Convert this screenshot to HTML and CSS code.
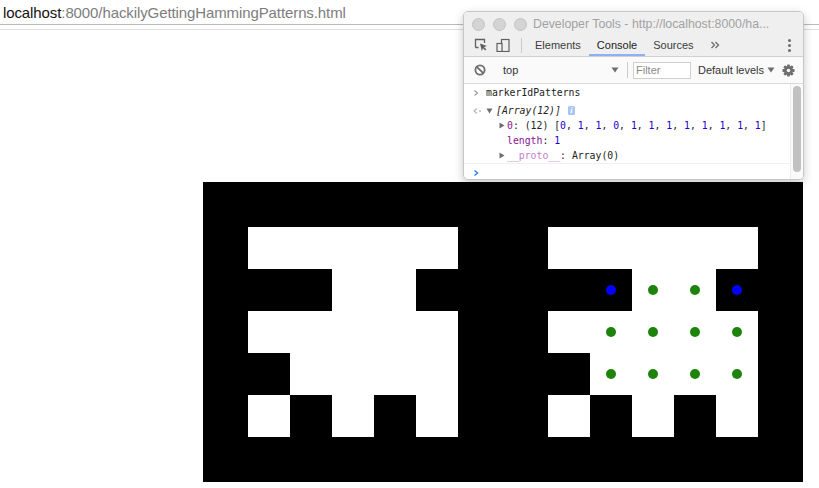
FILE: index.html
```html
<!DOCTYPE html>
<html>
<head>
<meta charset="utf-8">
<link rel="stylesheet" href="styles.css">
</head>
<body>
<header class="urlbar"><span class="host">localhost</span><span class="path">:8000/hackilyGettingHammingPatterns.html</span></header>
<div class="urlline"></div>
<main class="stage">
  <div class="markers">
    <div class="marker">
      <div class="cell w"></div><div class="cell w"></div><div class="cell w"></div><div class="cell w"></div><div class="cell w"></div>
      <div class="cell"></div><div class="cell"></div><div class="cell w"></div><div class="cell w"></div><div class="cell"></div>
      <div class="cell w"></div><div class="cell w"></div><div class="cell w"></div><div class="cell w"></div><div class="cell w"></div>
      <div class="cell"></div><div class="cell w"></div><div class="cell w"></div><div class="cell w"></div><div class="cell w"></div>
      <div class="cell w"></div><div class="cell"></div><div class="cell w"></div><div class="cell"></div><div class="cell w"></div>
    </div>
    <div class="marker">
      <div class="cell w"></div><div class="cell w"></div><div class="cell w"></div><div class="cell w"></div><div class="cell w"></div>
      <div class="cell"></div><div class="cell"><span class="dot blue"></span></div><div class="cell w"><span class="dot"></span></div><div class="cell w"><span class="dot"></span></div><div class="cell"><span class="dot blue"></span></div>
      <div class="cell w"></div><div class="cell w"><span class="dot"></span></div><div class="cell w"><span class="dot"></span></div><div class="cell w"><span class="dot"></span></div><div class="cell w"><span class="dot"></span></div>
      <div class="cell"></div><div class="cell w"><span class="dot"></span></div><div class="cell w"><span class="dot"></span></div><div class="cell w"><span class="dot"></span></div><div class="cell w"><span class="dot"></span></div>
      <div class="cell w"></div><div class="cell"></div><div class="cell w"></div><div class="cell"></div><div class="cell w"></div>
    </div>
  </div>
</main>

<div class="devtools">
  <div class="titlebar">
    <span class="light"></span><span class="light"></span><span class="light"></span>
    <span class="title">Developer Tools - http://localhost:8000/ha...</span>
  </div>
  <div class="tabbar">
    <svg class="ico" width="14" height="14" viewBox="0 0 14 14"><path d="M1.5 9.5V1.5h9v3.5" fill="none" stroke="#5f5f5f" stroke-width="1.3"/><path d="M1.5 9.5h3" fill="none" stroke="#5f5f5f" stroke-width="1.3"/><path d="M6 5.5l7 2.6-3 1 2.4 2.4-1.1 1.1-2.4-2.4-1 3z" fill="#5f5f5f"/></svg>
    <svg class="ico" width="14" height="14" viewBox="0 0 14 14"><rect x="5.5" y="1.5" width="7.5" height="12" fill="none" stroke="#5f5f5f" stroke-width="1.2"/><rect x="1" y="5.5" width="5" height="8" fill="#efefef" stroke="#5f5f5f" stroke-width="1.2"/></svg>
    <span class="vsep"></span>
    <span class="tab">Elements</span>
    <span class="tab active">Console</span>
    <span class="tab">Sources</span>
    <svg class="more" width="10" height="10" viewBox="0 0 10 10"><path d="M1.5 2l3 3-3 3M5.5 2l3 3-3 3" fill="none" stroke="#6e6e6e" stroke-width="1.3"/></svg>
    <span class="kebab"><i></i><i></i><i></i></span>
  </div>
  <div class="ctoolbar">
    <svg class="block" width="12" height="12" viewBox="0 0 12 12"><circle cx="6" cy="6" r="4.6" fill="none" stroke="#6e6e6e" stroke-width="1.8"/><path d="M2.8 2.8l6.4 6.4" stroke="#6e6e6e" stroke-width="1.8"/></svg>
    <span class="context">top</span>
    <svg class="caret" width="8" height="6" viewBox="0 0 8 6"><path d="M0.5 0.5h7L4 5.5z" fill="#6e6e6e"/></svg>
    <span class="vsep small"></span>
    <span class="filter">Filter</span>
    <span class="levels">Default levels</span>
    <svg class="caret" width="8" height="6" viewBox="0 0 8 6"><path d="M0.5 0.5h7L4 5.5z" fill="#6e6e6e"/></svg>
    <svg class="gear" width="13" height="13" viewBox="0 0 14 14"><g fill="#6e6e6e"><rect x="5.5" y="0.5" width="3" height="13" rx="0.5"/><rect x="5.5" y="0.5" width="3" height="13" rx="0.5" transform="rotate(45 7 7)"/><rect x="5.5" y="0.5" width="3" height="13" rx="0.5" transform="rotate(90 7 7)"/><rect x="5.5" y="0.5" width="3" height="13" rx="0.5" transform="rotate(135 7 7)"/><circle cx="7" cy="7" r="4.8"/></g><circle cx="7" cy="7" r="1.9" fill="#fafafa"/></svg>
  </div>
  <div class="console">
    <div class="messages">
      <div class="msg cmd">
        <svg class="gut" width="6" height="8" viewBox="0 0 6 8"><path d="M1.5 1.5l3 2.5-3 2.5" fill="none" stroke="#9a9a9a" stroke-width="1.1"/></svg>
        <span class="txt">markerIdPatterns</span>
      </div>
      <div class="msg result">
        <div class="line">
          <svg class="gut" width="9" height="8" viewBox="0 0 9 8"><path d="M4 1.5l-3 2.5 3 2.5" fill="none" stroke="#b4b4b4" stroke-width="1.1"/><circle cx="7" cy="4" r="0.9" fill="#b4b4b4"/></svg>
          <svg class="tri down" width="7" height="6" viewBox="0 0 7 6"><path d="M0.5 0.5h6L3.5 5.5z" fill="#6e6e6e"/></svg>
          <span class="txt it">[Array(12)]</span>
          <span class="info">i</span>
        </div>
        <div class="line sub">
          <svg class="tri" width="6" height="7" viewBox="0 0 6 7"><path d="M0.5 0.5v6l5-3z" fill="#6e6e6e"/></svg>
          <span class="txt"><span class="k">0</span>: (12) [<span class="n">0</span>, <span class="n">1</span>, <span class="n">1</span>, <span class="n">0</span>, <span class="n">1</span>, <span class="n">1</span>, <span class="n">1</span>, <span class="n">1</span>, <span class="n">1</span>, <span class="n">1</span>, <span class="n">1</span>, <span class="n">1</span>]</span>
        </div>
        <div class="line sub nochild">
          <span class="txt"><span class="k">length</span>: <span class="n">1</span></span>
        </div>
        <div class="line sub">
          <svg class="tri" width="6" height="7" viewBox="0 0 6 7"><path d="M0.5 0.5v6l5-3z" fill="#6e6e6e"/></svg>
          <span class="txt"><span class="k dim">__proto__</span>: Array(0)</span>
        </div>
      </div>
      <div class="msg prompt">
        <svg class="gut" width="6" height="8" viewBox="0 0 6 8"><path d="M1.5 1.5l3 2.5-3 2.5" fill="none" stroke="#367cf1" stroke-width="1.5"/></svg>
      </div>
    </div>
    <div class="scroll"><div class="thumb"></div></div>
  </div>
</div>
</body>
</html>
```

FILE: styles.css
```css
html, body {
  margin: 0;
  padding: 0;
  background: #ffffff;
}
body {
  width: 819px;
  height: 488px;
  overflow: hidden;
  position: relative;
  font-family: "Liberation Sans", Arial, sans-serif;
}

.urlbar {
  height: 25px;
  line-height: 25px;
  box-sizing: border-box;
  border-bottom: 1px solid #b9b9b9;
  padding-left: 3px;
  font-size: 15px;
  letter-spacing: -0.1px;
  white-space: nowrap;
}
.host { color: #111111; }
.path { color: #7d7d7d; }
.urlline {
  margin-top: 4px;
  height: 1px;
  background: #dedede;
}

.stage {
  padding: 152px 0 0 203px;
}
.markers {
  display: flex;
}
.marker {
  width: 300px;
  height: 300px;
  box-sizing: border-box;
  padding: 45px;
  background: #000;
  display: grid;
  grid-template-columns: repeat(5, 42px);
  grid-template-rows: repeat(5, 42px);
}
.cell {
  background: #000;
  display: flex;
  align-items: center;
  justify-content: center;
}
.cell.w { background: #fff; }
.dot {
  width: 10px;
  height: 10px;
  border-radius: 50%;
  background: #1c840a;
}
.dot.blue { background: #0000ff; }

/* devtools window */
.devtools {
  position: absolute;
  left: 463px;
  top: 11px;
  width: 341px;
  height: 169px;
  box-sizing: border-box;
  border: 1px solid #c6c6c6;
  border-radius: 5px;
  background: #fff;
  box-shadow: 0 3px 10px rgba(0,0,0,0.22);
  overflow: hidden;
  display: flex;
  flex-direction: column;
}
.titlebar {
  height: 22px;
  box-sizing: border-box;
  padding-top: 2px;
  background: #efefef;
  display: flex;
  align-items: center;
  padding-left: 8px;
  gap: 8px;
}
.light {
  width: 11px;
  height: 11px;
  border-radius: 50%;
  background: #d4d4d4;
  border: 0.5px solid #c3c3c3;
}
.title {
  margin-left: -2px;
  font-size: 12.3px;
  color: #a2a2a2;
  white-space: nowrap;
}

.tabbar {
  height: 23px;
  box-sizing: border-box;
  background: #efefef;
  border-bottom: 1px solid #d0d0d0;
  display: flex;
  align-items: center;
  padding-left: 10px;
  font-size: 11px;
  color: #333;
}
.ico { margin-right: 8px; flex: none; }
.vsep {
  width: 1px;
  height: 15px;
  background: #cbcbcb;
  margin: 0 5px 0 3px;
}
.tab {
  height: 22px;
  line-height: 22px;
  padding: 0 8px;
  box-sizing: border-box;
  color: #3c3c3c;
}
.tab.active {
  color: #222;
  border-bottom: 2px solid #8db1f2;
  line-height: 22px;
}
.more { margin-left: 8px; }
.kebab {
  margin-left: auto;
  margin-right: 12px;
  display: flex;
  flex-direction: column;
  gap: 2px;
}
.kebab i {
  width: 3px;
  height: 3px;
  border-radius: 50%;
  background: #6e6e6e;
}

.ctoolbar {
  height: 27px;
  box-sizing: border-box;
  background: #fafafa;
  border-bottom: 1px solid #dadada;
  display: flex;
  align-items: center;
  padding-left: 10px;
  font-size: 11px;
  color: #333;
}
.block { flex: none; }
.context {
  margin-left: 17px;
  width: 108px;
}
.vsep.small {
  height: 16px;
  margin: 0 5px 0 8px;
}
.filter {
  width: 58px;
  height: 17px;
  box-sizing: border-box;
  border: 1px solid #d0d0d0;
  background: #fff;
  color: #8a8a8a;
  line-height: 15px;
  padding-left: 2px;
}
.levels { margin-left: 7px; margin-right: 3px; }
.gear { margin-left: 7px; }

.console {
  flex: 1;
  display: flex;
  min-height: 0;
  font-family: "DejaVu Sans Mono", Menlo, monospace;
  font-size: 9.8px;
  color: #222;
}
.messages { flex: 1; }
.msg {
  display: flex;
  align-items: center;
  padding-left: 9px;
}
.msg.cmd {
  height: 17px;
}
.msg.cmd .gut { margin-right: 7px; }
.msg.result {
  display: block;
  padding-left: 0;
  padding-top: 2px;
  border-bottom: 1px solid #f0f0f0;
}
.line {
  display: flex;
  align-items: center;
  height: 15px;
  padding-left: 9px;
  white-space: pre;
}
.line .gut { margin-right: 4px; }
.tri.down { margin-right: 3px; }
.line.sub { padding-left: 35px; }
.line.sub .tri { margin-right: 2px; }
.line.sub.nochild { padding-left: 43px; }
.it { font-style: italic; }
.info {
  margin-left: 7px;
  width: 7px;
  height: 9px;
  border-radius: 1.5px;
  background: #a9c6f2;
  color: #fff;
  font-family: "Liberation Serif", serif;
  font-style: italic;
  font-weight: bold;
  font-size: 8px;
  line-height: 9px;
  text-align: center;
}
.k { color: #881391; }
.k.dim { color: #c47ecb; }
.n { color: #1c00cf; }
.msg.prompt { height: 17px; }

.scroll {
  width: 13px;
  flex: none;
  border-left: 1px solid #ececec;
  background: #fafafa;
  display: flex;
  justify-content: center;
  padding-top: 2px;
  box-sizing: border-box;
}
.thumb {
  width: 8px;
  height: 86px;
  border-radius: 4px;
  background: #c1c1c1;
}
```
